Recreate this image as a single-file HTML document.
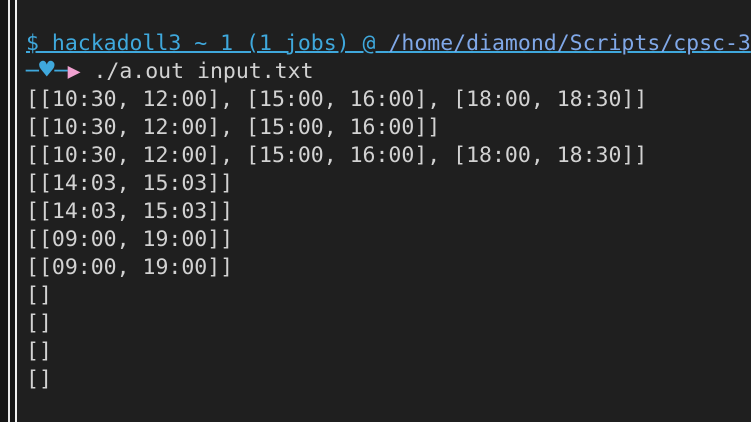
<!DOCTYPE html>
<html><head><style>
html,body{margin:0;padding:0;width:751px;height:422px;overflow:hidden;background:#1f1f1f;}
.side{position:absolute;left:0;top:0;width:17px;height:422px;background:#151515;}
.l1{position:absolute;left:8px;top:0;width:2px;height:422px;background:#e8e8e8;}
.l2{position:absolute;left:15px;top:0;width:2px;height:422px;background:#f0f0f0;}
.term{position:absolute;left:26px;top:30px;font-family:"DejaVu Sans Mono","Liberation Mono",monospace;font-size:21.5px;line-height:28px;color:#d2d2d2;white-space:pre;}
.p{color:#3fa8dc;text-decoration:underline;text-decoration-thickness:2px;}
.q{color:#80a8e8;}
.h{color:#3fa8dc;}.hb{font-size:26px;line-height:20px;}.a{color:#f0a0d0;}
</style></head><body>
<div class="side"></div><div class="l1"></div><div class="l2"></div>
<div class="term"><span class="p">$ hackadoll3 ~ 1 (1 jobs) @ <span class="q">/home/diamond/Scripts/cpsc-3</span></span>
<span class="h">─<span class="hb">♥</span>─</span><span class="a">▶</span> ./a.out input.txt
[[10:30, 12:00], [15:00, 16:00], [18:00, 18:30]]
[[10:30, 12:00], [15:00, 16:00]]
[[10:30, 12:00], [15:00, 16:00], [18:00, 18:30]]
[[14:03, 15:03]]
[[14:03, 15:03]]
[[09:00, 19:00]]
[[09:00, 19:00]]
[]
[]
[]
[]</div>
</body></html>
